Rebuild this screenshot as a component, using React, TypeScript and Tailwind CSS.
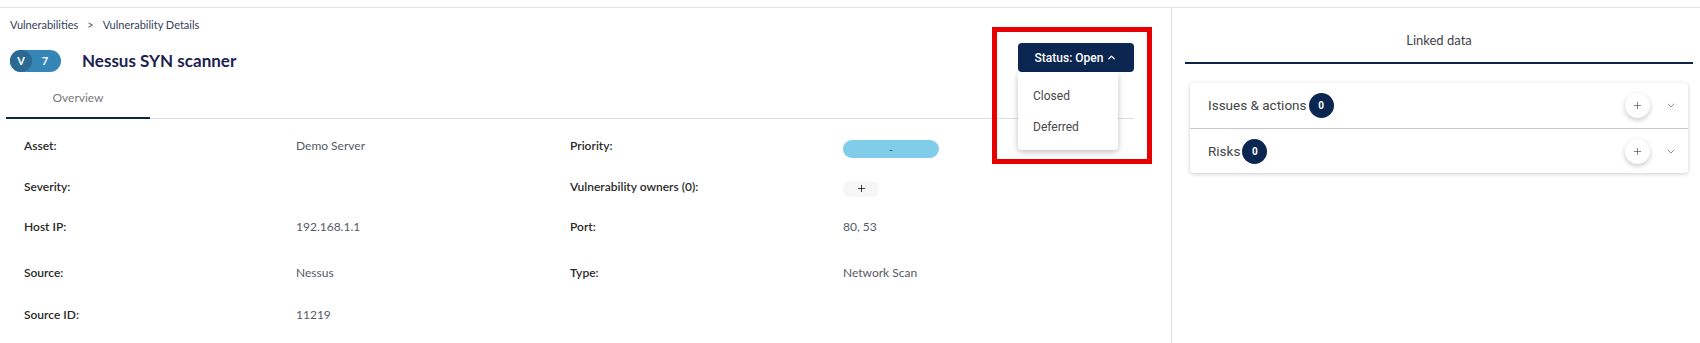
import { ChevronDown, ChevronUp, Plus } from "lucide-react";

type Cell = { label: string; value?: string; kind?: "pill" | "add" };

const ROWS: { h: string; cells: [Cell, Cell | null] }[] = [
  { h: "h-[40px]", cells: [{ label: "Asset:", value: "Demo Server" }, { label: "Priority:", kind: "pill" }] },
  { h: "h-[42px]", cells: [{ label: "Severity:" }, { label: "Vulnerability owners (0):", kind: "add" }] },
  { h: "h-[38px]", cells: [{ label: "Host IP:", value: "192.168.1.1" }, { label: "Port:", value: "80, 53" }] },
  { h: "h-[54px]", cells: [{ label: "Source:", value: "Nessus" }, { label: "Type:", value: "Network Scan" }] },
  { h: "h-[30px]", cells: [{ label: "Source ID:", value: "11219" }, null] },
];

function DetailCell({ cell }: { cell: Cell | null }) {
  if (!cell) return <><div /><div /></>;
  return (
    <>
      <div className="text-[12px] font-semibold text-[#2a2a2a]">{cell.label}</div>
      <div className="text-[12px] text-[#555a66]">
        {cell.kind === "pill" && (
          <div className="mt-[6px] h-[18px] w-[96px] rounded-full bg-[#7fcde8] flex items-center justify-center text-[10px] text-[#1f3b55]">
            -
          </div>
        )}
        {cell.kind === "add" && (
          <div className="mt-[3px] h-[16px] w-[36px] rounded-full bg-[#f6f6f6] flex items-center justify-center text-black">
            <Plus size={11} strokeWidth={1.6} />
          </div>
        )}
        {!cell.kind && cell.value}
      </div>
    </>
  );
}

function LinkedRow({ label, count, first }: { label: string; count: number; first?: boolean }) {
  return (
    <div
      className={`h-[45px] flex items-center pl-[18px] pr-[11px] ${first ? "" : "border-t border-[#c9c9c9]"}`}
    >
      <span className="text-[13.5px] text-[#454545] font-['Roboto',sans-serif]">{label}</span>
      <span className="ml-[2px] w-[25px] h-[25px] rounded-full bg-[#0b2650] text-white text-[10px] font-bold flex items-center justify-center font-['Roboto',sans-serif]">
        {count}
      </span>
      <div className="ml-auto w-[25px] h-[25px] rounded-full bg-white shadow-[0_2px_5px_rgba(0,0,0,0.22)] flex items-center justify-center text-[#444]">
        <Plus size={11} strokeWidth={1.4} />
      </div>
      <div className="ml-[15px] w-[12px] flex justify-center text-[#6f6f6f]">
        <ChevronDown size={13} strokeWidth={1.5} />
      </div>
    </div>
  );
}

export default function App() {
  return (
    <div className="w-[1700px] h-[343px] bg-white font-['Lato',sans-serif] overflow-hidden relative">
      <div className="h-[8px] border-b border-[#e3e3ea]" />
      <div className="flex h-[335px]">
        {/* left: vulnerability details */}
        <div className="w-[1172px] border-r border-[#dcdcdc] pl-[6px] pr-[37px]">
          <div className="pl-[4px] pt-[9px] leading-[15px] text-[11px] text-[#34405a] flex items-center">
            <span>Vulnerabilities</span>
            <span className="mx-[9px] text-[#555]">&gt;</span>
            <span>Vulnerability Details</span>
          </div>

          <div className="mt-[11px] flex items-end pl-[4px]">
            <div className="h-[22px] w-[51px] rounded-full bg-[#3585b6] flex items-center text-white text-[11px] font-bold">
              <span className="w-[22px] h-[22px] rounded-full bg-[#2b6892] flex items-center justify-center">V</span>
              <span className="flex-1 text-center pr-[3px]">7</span>
            </div>
            <h1 className="ml-[21px] leading-[22px] text-[17px] font-bold text-[#1c1f50]">Nessus SYN scanner</h1>

            <div className="ml-auto relative">
              <button className="h-[29px] w-[116px] rounded-[4px] bg-[#0b2650] text-white text-[12px] font-medium font-['Roboto',sans-serif] flex items-center justify-center gap-[3px]">
                Status: Open
                <ChevronUp size={11} strokeWidth={3} />
              </button>
              <div className="absolute top-full left-0 w-[100px] rounded-[4px] bg-white shadow-[0_2px_6px_rgba(0,0,0,0.25)] py-[8px] z-10 font-['Roboto',sans-serif] text-[12px] text-[#484848]">
                <div className="h-[31px] flex items-center pl-[15px]">Closed</div>
                <div className="h-[31px] flex items-center pl-[15px]">Deferred</div>
              </div>
            </div>
          </div>

          <div className="border-b border-[#dedede] flex">
            <div className="w-[144px] pt-[17px] pb-[10px] border-b-2 border-[#0d2449] -mb-px text-center text-[12px] leading-[18px] text-[#7a7a7a]">
              Overview
            </div>
          </div>

          <div className="pt-[7px] pl-[18px]">
            {ROWS.map((row, i) => (
              <div key={i} className={`grid grid-cols-[272px_274px_273px_273px] items-center ${row.h}`}>
                <DetailCell cell={row.cells[0]} />
                <DetailCell cell={row.cells[1]} />
              </div>
            ))}
          </div>
        </div>

        {/* right: linked data */}
        <div className="flex-1">
          <div className="ml-[13px] mr-[7px] h-[56px] pt-[12px] border-b-2 border-[#0d2449] flex items-center justify-center text-[13px] text-[#3f3f48]">
            Linked data
          </div>
          <div className="mt-[19px] ml-[18px] mr-[12px] rounded-[4px] bg-white shadow-[0_1px_4px_rgba(0,0,0,0.2)]">
            <LinkedRow label="Issues & actions" count={0} first />
            <LinkedRow label="Risks" count={0} />
          </div>
        </div>
      </div>

      {/* annotation frame around the status menu */}
      <div className="absolute left-[992px] top-[27px] w-[160px] h-[137px] border-[5px] border-[#e60000] pointer-events-none" />
    </div>
  );
}
